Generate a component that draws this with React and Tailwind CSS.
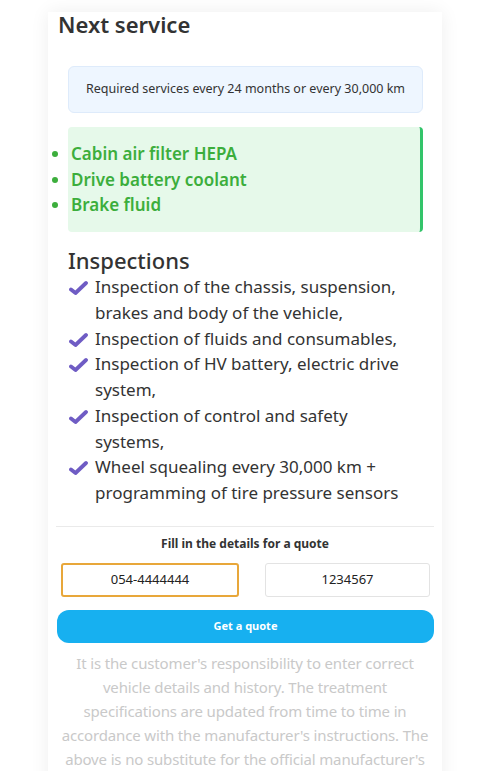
import React from "react";

const Check = () => (
  <svg width="19" height="16" viewBox="0 0 19 16" className="shrink-0 mt-[6px]">
    <path d="M2 9.5 L6.5 13 L17 3" fill="none" stroke="#6f5cc4" strokeWidth="3.8" strokeLinecap="round" strokeLinejoin="round" />
  </svg>
);

const inspections = [
  "Inspection of the chassis, suspension, brakes and body of the vehicle,",
  "Inspection of fluids and consumables,",
  "Inspection of HV battery, electric drive system,",
  "Inspection of control and safety systems,",
  "Wheel squealing every 30,000 km + programming of tire pressure sensors",
];

export default function App() {
  return (
    <div className="w-[484px] h-[771px] overflow-hidden bg-white" style={{ fontFamily: '"Noto Sans", "Open Sans", sans-serif' }}>
      <div className="ml-[48px] w-[394px] mt-[14px] bg-white shadow-[0_0_18px_rgba(0,0,0,0.07)] pb-10">
        <h1 className="pl-[10px] text-[22px] leading-[24px] font-semibold text-[#333] -mt-[2px]">Next service</h1>
        <div className="mt-[30px] ml-[20px] w-[355px] h-[47px] rounded-[6px] border border-[#deebfb] bg-[#eef6ff] flex items-center justify-center text-[12.5px] text-[#333]">
          Required services every 24 months or every 30,000 km
        </div>
        <div className="mt-[14px] ml-[20px] w-[355px] h-[105px] rounded-[4px] bg-[#e6f9ea] border-r-[3px] border-[#33c46a] flex items-center">
          <ul className="list-disc pl-[3px] text-[17px] leading-[25.5px] font-semibold text-[#3cae3c] marker:text-[#3cae3c]">
            <li>Cabin air filter HEPA</li>
            <li>Drive battery coolant</li>
            <li>Brake fluid</li>
          </ul>
        </div>
        <h2 className="mt-[14px] ml-[20px] text-[22px] leading-[28px] font-medium text-[#333]">Inspections</h2>
        <ul className="ml-[21px] mr-[40px] text-[17px] leading-[25.75px] text-[#333]">
          {inspections.map((t) => (
            <li key={t} className="flex gap-[7px]">
              <Check />
              <span>{t}</span>
            </li>
          ))}
        </ul>
        <div className="mt-[20px] mx-[8px] border-t border-[#eaeaea]" />
        <div className="mt-[8px] text-center text-[12px] font-bold text-[#333]">Fill in the details for a quote</div>
        <div className="mt-[10px] flex gap-[26px] pl-[13px] pr-[12px]">
          <div className="w-[178px] h-[34px] rounded-[3px] border-2 border-[#e8a73a] flex items-center justify-center text-[13px] text-[#222]">054-4444444</div>
          <div className="flex-1 h-[34px] rounded-[3px] border border-[#e3e3e3] flex items-center justify-center text-[13px] text-[#222]">1234567</div>
        </div>
        <button className="mt-[13px] ml-[9px] w-[377px] h-[33px] rounded-[12px] bg-[#17b0f0] text-white text-[11px] font-bold">Get a quote</button>
        <p className="mt-[8px] px-[9px] text-center text-[15px] leading-[24px] tracking-[-0.15px] text-[#c9c9c9]">
          It is the customer's responsibility to enter correct vehicle details and history. The treatment specifications are updated from time to time in accordance with the manufacturer's instructions. The above is no substitute for the official manufacturer's instructions.
        </p>
      </div>
    </div>
  );
}
